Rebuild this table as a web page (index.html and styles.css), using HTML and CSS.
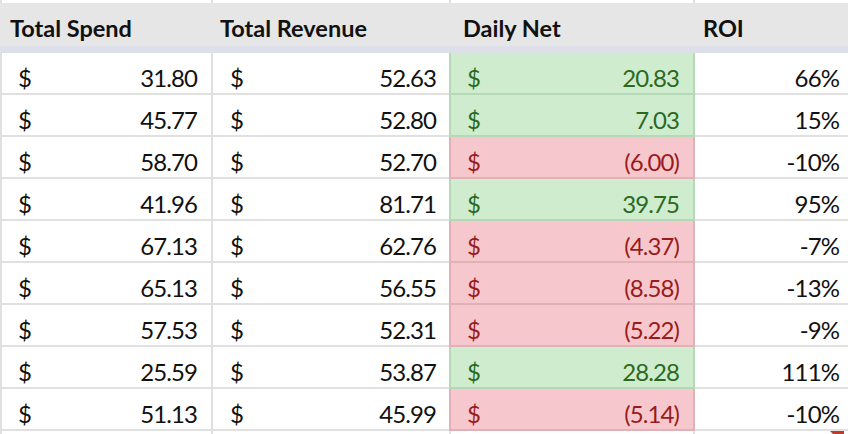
FILE: index.html
```html
<!DOCTYPE html>
<html>
<head>
<meta charset="utf-8">
<link rel="stylesheet" href="styles.css">
</head>
<body>
<div class="sheet">
  <div class="row strip">
    <div class="c c1"></div><div class="c c2"></div><div class="c c3"></div><div class="c c4"></div>
  </div>
  <div class="head">
    <div class="h h1">Total Spend</div>
    <div class="h h2">Total Revenue</div>
    <div class="h h3">Daily Net</div>
    <div class="h h4">ROI</div>
  </div>
  <div class="band"></div>

  <div class="row">
    <div class="c c1 money"><span>$</span><span>31.80</span></div>
    <div class="c c2 money"><span>$</span><span>52.63</span></div>
    <div class="c c3 money pos"><span>$</span><span>20.83</span></div>
    <div class="c c4 pct">66%</div>
  </div>
  <div class="row">
    <div class="c c1 money"><span>$</span><span>45.77</span></div>
    <div class="c c2 money"><span>$</span><span>52.80</span></div>
    <div class="c c3 money pos"><span>$</span><span>7.03</span></div>
    <div class="c c4 pct">15%</div>
  </div>
  <div class="row">
    <div class="c c1 money"><span>$</span><span>58.70</span></div>
    <div class="c c2 money"><span>$</span><span>52.70</span></div>
    <div class="c c3 money neg"><span>$</span><span>(6.00)</span></div>
    <div class="c c4 pct">-10%</div>
  </div>
  <div class="row">
    <div class="c c1 money"><span>$</span><span>41.96</span></div>
    <div class="c c2 money"><span>$</span><span>81.71</span></div>
    <div class="c c3 money pos"><span>$</span><span>39.75</span></div>
    <div class="c c4 pct">95%</div>
  </div>
  <div class="row">
    <div class="c c1 money"><span>$</span><span>67.13</span></div>
    <div class="c c2 money"><span>$</span><span>62.76</span></div>
    <div class="c c3 money neg"><span>$</span><span>(4.37)</span></div>
    <div class="c c4 pct">-7%</div>
  </div>
  <div class="row">
    <div class="c c1 money"><span>$</span><span>65.13</span></div>
    <div class="c c2 money"><span>$</span><span>56.55</span></div>
    <div class="c c3 money neg"><span>$</span><span>(8.58)</span></div>
    <div class="c c4 pct">-13%</div>
  </div>
  <div class="row">
    <div class="c c1 money"><span>$</span><span>57.53</span></div>
    <div class="c c2 money"><span>$</span><span>52.31</span></div>
    <div class="c c3 money neg"><span>$</span><span>(5.22)</span></div>
    <div class="c c4 pct">-9%</div>
  </div>
  <div class="row">
    <div class="c c1 money"><span>$</span><span>25.59</span></div>
    <div class="c c2 money"><span>$</span><span>53.87</span></div>
    <div class="c c3 money pos"><span>$</span><span>28.28</span></div>
    <div class="c c4 pct">111%</div>
  </div>
  <div class="row">
    <div class="c c1 money"><span>$</span><span>51.13</span></div>
    <div class="c c2 money"><span>$</span><span>45.99</span></div>
    <div class="c c3 money neg"><span>$</span><span>(5.14)</span></div>
    <div class="c c4 pct">-10%</div>
  </div>
  <div class="row last">
    <div class="c c1"></div><div class="c c2"></div><div class="c c3"></div><div class="c c4 note"></div>
  </div>
</div>
</body>
</html>
```

FILE: styles.css
```css
html, body {
  margin: 0;
  padding: 0;
  background: #ffffff;
}
body {
  font-family: Lato, "Open Sans", "Liberation Sans", sans-serif;
  color: #111111;
  width: 848px;
  height: 434px;
  overflow: hidden;
}
.sheet {
  display: flex;
  flex-direction: column;
  width: 870px;
}
.row {
  display: grid;
  grid-template-columns: 213px 236px 246px 175px;
  height: 42px;
}
.c {
  box-sizing: border-box;
  border-bottom: 2px solid #e0e0e0;
  border-right: 2px solid #e0e0e0;
  font-size: 24px;
  letter-spacing: -0.9px;
  line-height: 1;
}
.c1 {
  border-left: 2px solid #e0e0e0;
  padding: 13px 14px 0 16px;
}
.c2 {
  border-right: none;
  padding: 13px 13px 0 17px;
}
.c3 {
  border-left: 2px solid #e0e0e0;
  padding: 13px 14px 0 16px;
}
.c4 {
  padding: 13px 29px 0 10px;
}
.money {
  display: flex;
  justify-content: space-between;
}
.pct {
  text-align: right;
}
.pos {
  background: #cfeccf;
  color: #2b6a1e;
  border-color: #b5d8b6;
}
.neg {
  background: #f6c8cd;
  color: #9a1b1b;
  border-color: #e0b2b7;
}
.strip {
  height: 3px;
}
.strip .c {
  border-bottom: none;
  padding: 0;
}
.head {
  display: grid;
  grid-template-columns: 213px 236px 246px 175px;
  height: 43px;
  background: #e6e6e6;
  font-weight: 700;
  font-size: 23.5px;
  color: #111111;
}
.h {
  padding-top: 14px;
  line-height: 1;
}
.h1 { padding-left: 10px; }
.h2 { padding-left: 7px; }
.h3 { padding-left: 14px; }
.h4 { padding-left: 8px; }
.band {
  height: 7px;
  background: #dde0e9;
}
.last .c {
  border-bottom: none;
  padding: 0;
}
.note {
  position: relative;
}
.note::after {
  content: "";
  position: absolute;
  top: 0;
  right: 24px;
  width: 0;
  height: 0;
  border-top: 14px solid #c0392b;
  border-left: 14px solid transparent;
}
```
